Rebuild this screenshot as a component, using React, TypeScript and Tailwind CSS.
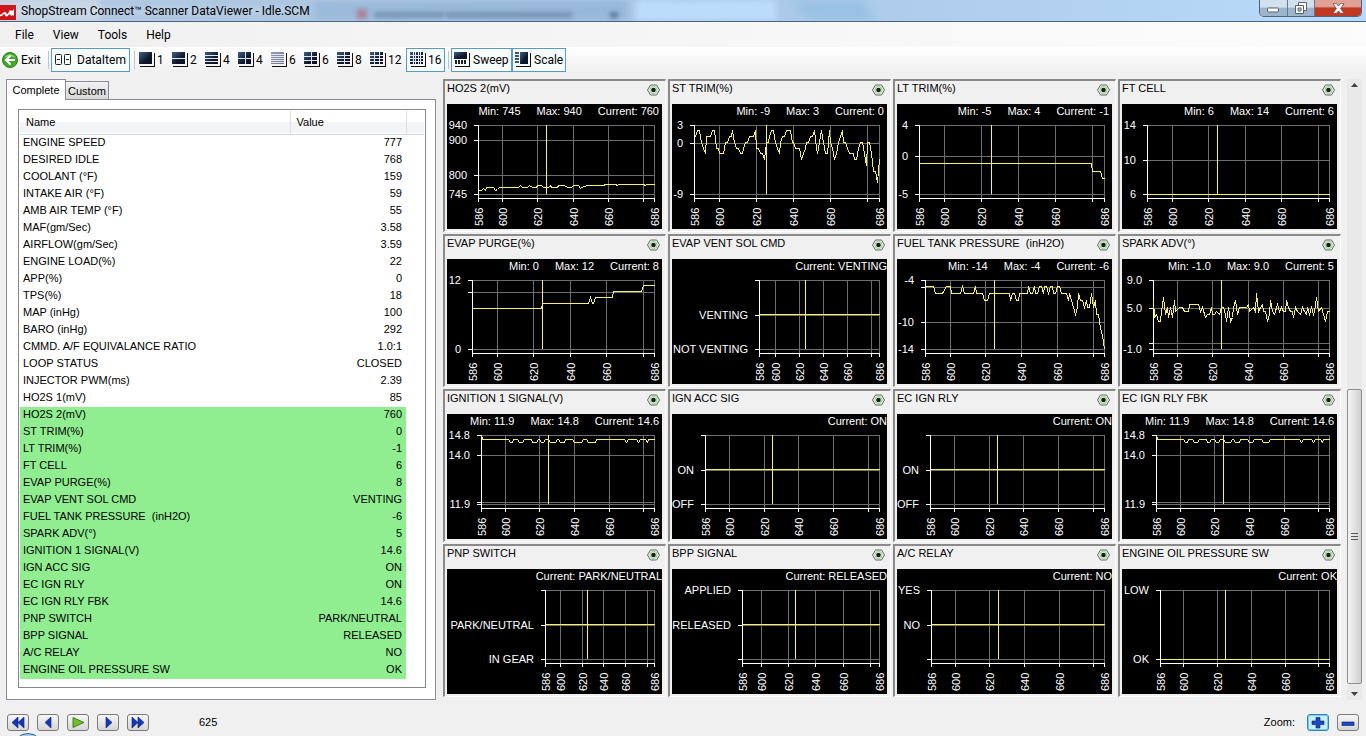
import type { ReactNode } from 'react';

type Tick = { v: number; label?: string };

type Graph = {
  title: string;
  stats: string[];
  left: number;
  min: number;
  max: number;
  ticks: Tick[];
  data: string;
  flush?: boolean;
};

const params: [string, string][] = [
  ['ENGINE SPEED', '777'],
  ['DESIRED IDLE', '768'],
  ['COOLANT (°F)', '159'],
  ['INTAKE AIR (°F)', '59'],
  ['AMB AIR TEMP (°F)', '55'],
  ['MAF(gm/Sec)', '3.58'],
  ['AIRFLOW(gm/Sec)', '3.59'],
  ['ENGINE LOAD(%)', '22'],
  ['APP(%)', '0'],
  ['TPS(%)', '18'],
  ['MAP (inHg)', '100'],
  ['BARO (inHg)', '292'],
  ['CMMD. A/F EQUIVALANCE RATIO', '1.0:1'],
  ['LOOP STATUS', 'CLOSED'],
  ['INJECTOR PWM(ms)', '2.39'],
  ['HO2S 1(mV)', '85'],
  ['HO2S 2(mV)', '760'],
  ['ST TRIM(%)', '0'],
  ['LT TRIM(%)', '-1'],
  ['FT CELL', '6'],
  ['EVAP PURGE(%)', '8'],
  ['EVAP VENT SOL CMD', 'VENTING'],
  ['FUEL TANK PRESSURE  (inH2O)', '-6'],
  ['SPARK ADV(°)', '5'],
  ['IGNITION 1 SIGNAL(V)', '14.6'],
  ['IGN ACC SIG', 'ON'],
  ['EC IGN RLY', 'ON'],
  ['EC IGN RLY FBK', '14.6'],
  ['PNP SWITCH', 'PARK/NEUTRAL'],
  ['BPP SIGNAL', 'RELEASED'],
  ['A/C RELAY', 'NO'],
  ['ENGINE OIL PRESSURE SW', 'OK'],
];

const FIRST_GRAPHED = 16;

// series are "frame,value" pairs, frames counted from 586
const stTrim = [
  1, 1, 2, 2, 0, -1, -2, 1, 1, 1, 2, 2, -1, -1, -2, -2, -2, 0, 0, 1, 1, 2, 0, -1, -1, -2, -2, -1, 0, 0, 1, 1, 1, 2, -1,
  -1, -2, -2, -3, 0, 0, 1, 2, 2, 0, -1, -2, 0, 1, 1, 2, 2, 2, 0, 0, -1, -1, -1, -3, -2, -1, 0, 0, 1, 1, 2, -1, -2, 0, 2,
  0, -2, -2, 2, 0, -1, -3, -2, 0, 1, 2, 0, 0, -1, -2, -2, -2, -3, -3, -1, 0, 0, -2, -4, 0, 0, -2, -5, -5, -7, -3,
]
  .map((v, i) => `${i},${v}`)
  .join(' ');

const o2 =
  '0,755 2,755 3,760 4,756 5,763 9,762 10,756 11,757 12,763 23,763 24,768 25,763 28,763 29,768 31,763 33,763 34,768 36,768 37,762 40,762 41,768 42,762 45,762 46,768 49,768 51,762 53,762 54,768 57,768 58,761 60,767 63,770 66,770 67,768 69,770 71,768 73,771 78,771 79,768 80,771 94,771 95,769 96,771 100,771';

const tank =
  '0,-5 5,-5 6,-6 10,-6 12,-5 14,-5 15,-6 20,-6 21,-5 22,-6 27,-6 28,-5 29,-6 32,-6 33,-7 35,-7 36,-6 47,-6 48,-7 49,-6 50,-6 51,-7 52,-7 53,-6 57,-6 58,-5 59,-6 60,-6 61,-5 62,-6 63,-6 64,-5 65,-5 66,-6 67,-5 68,-5 69,-6 70,-5 71,-5 72,-6 73,-6 74,-5 75,-5 76,-6 79,-6 80,-7 81,-6 82,-7 84,-9 85,-8 86,-6 87,-7 88,-7 89,-8 90,-7 91,-8 92,-8 93,-6 94,-8 95,-7 96,-9 97,-9 98,-11 99,-12 100,-14';

const spark =
  '0,6 1,3.5 2,4 3,3 4,3 5,4.5 6,6.5 7,4 8,5 9,3.5 10,5 11,3.5 12,6 13,4.5 15,5 17,5 18,4.5 20,4.5 21,5.5 26,5.5 27,4.5 28,5 30,3.5 31,4 32,4 33,5 34,4 35,4 36,4.5 38,4 39,5 40,5 41,4 42,3 43,5 44,3 45,3.5 46,5 47,6 48,4 49,5 53,5 54,5.5 55,4.5 57,5 58,4.5 59,7 60,4.5 61,5 62,5.5 63,4.5 64,4.5 65,3 66,4 67,6 68,4.5 69,4 71,5.5 72,4.5 73,5 74,4.5 75,4.5 76,6 77,5 78,4.5 79,4.5 80,3.5 81,5 82,4.5 84,4 85,5 86,4.5 87,4 88,5 89,4 90,5 91,4 92,4.5 93,6.5 94,4.5 96,5 97,4 98,3 99,4.5 100,4.5';

// battery voltage sits at 14.6 and drops by a tenth over each of these spans
function volts(dips: [number, number][]) {
  const body = dips.map(([a, b]) => `${a - 1},14.6 ${a},14.5 ${b},14.5 ${b + 1},14.6`).join(' ');
  return `0,14.8 1,14.6 ${body} 100,14.6`;
}

const flat = (v: number) => `0,${v} 100,${v}`;

const voltTicks: Tick[] = [
  { v: 14.8, label: '14.8' },
  { v: 14, label: '14.0' },
  { v: 12 },
  { v: 11.9, label: '11.9' },
];

const stateTicks = (top?: string, mid?: string, bottom?: string): Tick[] => [
  { v: 2, label: top },
  { v: 1, label: mid },
  { v: 0, label: bottom },
];

const graphs: Graph[] = [
  {
    title: 'HO2S 2(mV)',
    stats: ['Min: 745', 'Max: 940', 'Current: 760'],
    left: 31, min: 745, max: 940,
    ticks: [{ v: 940, label: '940' }, { v: 900, label: '900' }, { v: 800, label: '800' }, { v: 745, label: '745' }],
    data: o2,
  },
  {
    title: 'ST TRIM(%)',
    stats: ['Min: -9', 'Max: 3', 'Current: 0'],
    left: 22, min: -9, max: 3,
    ticks: [{ v: 3, label: '3' }, { v: 0, label: '0' }, { v: -9, label: '-9' }],
    data: stTrim,
  },
  {
    title: 'LT TRIM(%)',
    stats: ['Min: -5', 'Max: 4', 'Current: -1'],
    left: 22, min: -5, max: 4,
    ticks: [{ v: 4, label: '4' }, { v: 0, label: '0' }, { v: -5, label: '-5' }],
    data: '0,-1 93,-1 94,-2 98,-2 99,-3 100,-3',
  },
  {
    title: 'FT CELL',
    stats: ['Min: 6', 'Max: 14', 'Current: 6'],
    left: 25, min: 6, max: 14,
    ticks: [{ v: 14, label: '14' }, { v: 10, label: '10' }, { v: 6, label: '6' }],
    data: flat(6),
  },
  {
    title: 'EVAP PURGE(%)',
    stats: ['Min: 0', 'Max: 12', 'Current: 8'],
    left: 25, min: 0, max: 12,
    ticks: [{ v: 12, label: '12' }, { v: 10 }, { v: 0, label: '0' }],
    data: '0,7 38,7 39,8 64,8 65,9 66,8 67,8 68,9 77,9 78,10 93,10 94,11 100,11',
  },
  {
    title: 'EVAP VENT SOL CMD',
    stats: ['Current: VENTING'],
    left: 87, min: 0, max: 2,
    ticks: stateTicks(undefined, 'VENTING', 'NOT VENTING'),
    data: flat(1),
    flush: true,
  },
  {
    title: 'FUEL TANK PRESSURE  (inH2O)',
    stats: ['Min: -14', 'Max: -4', 'Current: -6'],
    left: 28, min: -14, max: -4,
    ticks: [{ v: -4, label: '-4' }, { v: -5 }, { v: -10, label: '-10' }, { v: -14, label: '-14' }],
    data: tank,
  },
  {
    title: 'SPARK ADV(°)',
    stats: ['Min: -1.0', 'Max: 9.0', 'Current: 5'],
    left: 31, min: -1, max: 9,
    ticks: [{ v: 9, label: '9.0' }, { v: 5, label: '5.0' }, { v: 0 }, { v: -1, label: '-1.0' }],
    data: spark,
  },
  {
    title: 'IGNITION 1 SIGNAL(V)',
    stats: ['Min: 11.9', 'Max: 14.8', 'Current: 14.6'],
    left: 34, min: 11.9, max: 14.8,
    ticks: voltTicks,
    data: volts([[17, 18], [22, 24], [30, 32], [35, 36], [40, 43], [46, 48], [54, 58], [62, 66], [84, 84], [91, 91], [96, 96]]),
  },
  {
    title: 'IGN ACC SIG',
    stats: ['Current: ON'],
    left: 33, min: 0, max: 2,
    ticks: stateTicks(undefined, 'ON', 'OFF'),
    data: flat(1),
    flush: true,
  },
  {
    title: 'EC IGN RLY',
    stats: ['Current: ON'],
    left: 33, min: 0, max: 2,
    ticks: stateTicks(undefined, 'ON', 'OFF'),
    data: flat(1),
    flush: true,
  },
  {
    title: 'EC IGN RLY FBK',
    stats: ['Min: 11.9', 'Max: 14.8', 'Current: 14.6'],
    left: 34, min: 11.9, max: 14.8,
    ticks: voltTicks,
    data: volts([[17, 18], [22, 24], [30, 31], [35, 36], [40, 43], [46, 48], [54, 56], [62, 65], [84, 84], [91, 91], [96, 96]]),
  },
  {
    title: 'PNP SWITCH',
    stats: ['Current: PARK/NEUTRAL'],
    left: 98, min: 0, max: 2,
    ticks: stateTicks(undefined, 'PARK/NEUTRAL', 'IN GEAR'),
    data: flat(1),
    flush: true,
  },
  {
    title: 'BPP SIGNAL',
    stats: ['Current: RELEASED'],
    left: 70, min: 0, max: 2,
    ticks: stateTicks('APPLIED', 'RELEASED'),
    data: flat(1),
    flush: true,
  },
  {
    title: 'A/C RELAY',
    stats: ['Current: NO'],
    left: 34, min: 0, max: 2,
    ticks: stateTicks('YES', 'NO'),
    data: flat(1),
    flush: true,
  },
  {
    title: 'ENGINE OIL PRESSURE SW',
    stats: ['Current: OK'],
    left: 38, min: 0, max: 1,
    ticks: [{ v: 1, label: 'LOW' }, { v: 0, label: 'OK' }],
    data: flat(0),
    flush: true,
  },
];

const frames = [586, 600, 620, 640, 660, 680, 686];
const CURSOR = 625;
const TOP = 21;
const BOTTOM = 90;
const RIGHT = 207;

function Plot({ graph }: { graph: Graph }) {
  const { left, min, max } = graph;
  const px = (f: number) => Math.floor(left + (f / 100) * (RIGHT - left)) + 0.5;
  const rawY = (v: number) => TOP + ((max - v) / (max - min)) * (BOTTOM - TOP);
  const tickY = (v: number) => Math.ceil(rawY(v) - 0.001) + 0.5;
  const points = graph.data
    .split(' ')
    .map((p) => p.split(',').map(Number))
    .map(([f, v]) => `${px(f)},${Math.floor(rawY(v) + 0.001) + 0.5}`)
    .join(' ');

  return (
    <svg viewBox="0 15 215 110" className="block w-full" shapeRendering="crispEdges" role="img" aria-label={graph.title}>
      <g stroke="#6e6e6e">
        {graph.ticks.map((t) => (
          <line key={t.v} x1={left} x2={RIGHT + 1} y1={tickY(t.v)} y2={tickY(t.v)} />
        ))}
        {frames.slice(1).map((f) => (
          <line key={f} x1={px(f - 586)} x2={px(f - 586)} y1={TOP} y2="94" />
        ))}
      </g>
      <g stroke="#ffffff">
        <path d={`M${left + 0.5} ${TOP}V98M${left} 94.5H${RIGHT + 1}`} fill="none" />
        {graph.ticks.map((t) => (
          <line key={t.v} x1={left - 4} x2={left} y1={tickY(t.v)} y2={tickY(t.v)} />
        ))}
        {frames.map((f) => (
          <line key={f} x1={px(f - 586)} x2={px(f - 586)} y1="94" y2="98" />
        ))}
      </g>
      <polyline points={points} fill="none" stroke="#f7f25c" />
      <line x1={px(CURSOR - 586)} x2={px(CURSOR - 586)} y1={TOP} y2={BOTTOM} stroke="#f7f25c" />
      <g fill="#ffffff" className="text-[11px]">
        {graph.ticks
          .filter((t) => t.label)
          .map((t) => (
            <text key={t.v} x={left - 11} y={tickY(t.v) + 3.5} textAnchor="end">
              {t.label}
            </text>
          ))}
        {frames
          .filter((f) => f !== 680)
          .map((f) => (
            <text key={f} transform={`translate(${px(f - 586) + 4.5} 122) rotate(-90)`}>
              {f}
            </text>
          ))}
      </g>
    </svg>
  );
}

function GraphCard({ graph }: { graph: Graph }) {
  return (
    <article className="border-t-2 border-r border-b border-l-2 border-t-[#8a8a8a] border-r-white border-b-white border-l-[#8a8a8a] bg-[#f0f0f0] pr-[3px] pb-0.5 pl-0.5">
      <header className="flex h-[23px] items-start justify-between">
        <h3 className="text-[11px] leading-[14px] whitespace-pre text-black">{graph.title}</h3>
        <button type="button" aria-label={`${graph.title} options`} className="mt-[3px] mr-0.5">
          <svg width="13" height="12" viewBox="0 0 13 12">
            <path d="M3.500 1h6l3 5-3 5h-6L.5 6z" fill="#eef8ec" stroke="#5c6b5c" />
            <circle cx="6.500" cy="6" r="3.600" fill="none" stroke="#9cc49c" />
            <circle cx="6.500" cy="6" r="2.300" fill="#10240f" />
          </svg>
        </button>
      </header>
      <div className="bg-black">
        <div
          className={`flex h-[15px] justify-end gap-4 text-[11px] leading-[14px] whitespace-nowrap text-white ${graph.flush ? 'pr-0' : 'pr-[3px]'}`}
        >
          {graph.stats.map((s) => (
            <span key={s}>{s}</span>
          ))}
        </div>
        <Plot graph={graph} />
      </div>
    </article>
  );
}

function LayoutIcon({ cols, rows, light }: { cols: number; rows: number; light?: boolean }) {
  return (
    <svg width="16" height="15" viewBox="0 0 16 15" shapeRendering="crispEdges">
      <path d="M15 1v13.500M1 14h14.500" stroke="#111" fill="none" />
      <rect width="13" height="12" fill={light ? 'url(#screenLight)' : 'url(#screen)'} />
      {Array.from({ length: cols - 1 }, (_, i) => (
        <rect key={`c${i}`} x={Math.round(((i + 1) * 13) / cols)} y="0" width="1" height="12" fill="#e4e8ee" />
      ))}
      {Array.from({ length: rows - 1 }, (_, i) => (
        <rect key={`r${i}`} x="0" y={Math.round(((i + 1) * 12) / rows)} width="13" height="1" fill="#e4e8ee" />
      ))}
    </svg>
  );
}

const layouts = [
  { n: 1, cols: 1, rows: 1 },
  { n: 2, cols: 1, rows: 2 },
  { n: 4, cols: 1, rows: 4 },
  { n: 4, cols: 2, rows: 2 },
  { n: 6, cols: 1, rows: 6, light: true },
  { n: 6, cols: 2, rows: 3 },
  { n: 8, cols: 2, rows: 4 },
  { n: 12, cols: 3, rows: 4 },
];

function Divider() {
  return <span className="h-[18px] w-px bg-[#c3c3c3]" />;
}

function TitleBar() {
  return (
    <header className="relative flex h-[22px] items-center overflow-hidden border-b border-[#4a6484] bg-linear-to-r from-[#c5d3e2] via-[#a9c7e6] to-[#b9dafa]">
      <div className="absolute inset-y-0 left-[100px] w-[528px] bg-[#8fb2d6] opacity-70 blur-[3px]" />
      <div className="absolute inset-y-1 left-3 w-[300px] bg-[#d5e2f0] opacity-60 blur-[5px]" />
      <div className="absolute top-[9px] left-[357px] h-2.5 w-2.5 bg-[#b0768c] opacity-80 blur-[2px]" />
      <div className="absolute top-3 left-[374px] h-1.5 w-[70px] bg-[#5f7d9c] opacity-60 blur-[2px]" />
      <div className="absolute top-3 left-[446px] h-1.5 w-[126px] bg-[#5f7d9c] opacity-60 blur-[2px]" />
      <div className="absolute top-3 left-[610px] h-1.5 w-2 bg-[#46617f] opacity-70 blur-[2px]" />
      <div className="absolute inset-y-0 left-[636px] w-[140px] bg-[#bcdcfc] blur-[3px]" />
      <div className="absolute inset-y-0 left-[800px] w-[70px] skew-x-[30deg] bg-[#8bb9dc] opacity-60 blur-[6px]" />
      <svg width="16" height="15" viewBox="0 0 16 15" className="relative mt-1">
        <rect width="16" height="15" fill="#d0141c" />
        <path d="M0 9.500c2 1 3-3 5-2.500s1 3 3 1.500l2-3.500 2 1 2-2v7l-1-1-2 1-1-2-3 2.500c-2 0-2-3-3-2.500S2 12 0 11z" fill="#fff" />
      </svg>
      <h1 className="relative ml-[5px] font-[Roboto,'Noto_Sans',sans-serif] text-[12px] text-black">
        ShopStream Connect™ Scanner DataViewer - Idle.SCM
      </h1>
      <div className="relative mr-1 ml-auto flex h-[17px] self-start overflow-hidden rounded-b-[5px] border border-t-0 border-[#4d6580]">
        <button
          type="button"
          aria-label="Minimize"
          className="flex w-7 items-center justify-center border-r border-[#5f7894] bg-linear-to-b from-[#d3e1ee] from-45% to-[#9db5cc] to-50%"
        >
          <svg width="13" height="6" viewBox="0 0 13 6" className="mt-1">
            <rect x=".5" y="1" width="11" height="4" rx="1" fill="#fff" stroke="#59636e" />
          </svg>
        </button>
        <button
          type="button"
          aria-label="Restore"
          className="flex w-[27px] items-center justify-center border-r border-[#5f7894] bg-linear-to-b from-[#d3e1ee] from-45% to-[#9db5cc] to-50%"
        >
          <svg width="13" height="13" viewBox="0 0 13 13">
            <path d="M3.500.5h8v8h-8z" fill="#fff" stroke="#59636e" />
            <path d="M.5 3.500h8v8h-8z" fill="#fff" stroke="#59636e" />
            <path d="M3 6h3v3H3z" fill="#b9c6d2" stroke="#59636e" />
          </svg>
        </button>
        <button
          type="button"
          aria-label="Close"
          className="flex w-[46px] items-center justify-center bg-linear-to-b from-[#e0a196] from-40% to-[#c03a22] to-50%"
        >
          <svg width="13" height="11" viewBox="0 0 13 11">
            <path
              d="M1 .7h3.500l2 2.300 2-2.300H12L8.600 5.500 12 10.300H8.500l-2-2.300-2 2.300H1l3.400-4.800z"
              fill="#fff"
              stroke="#6b4a4a"
              strokeWidth=".8"
            />
          </svg>
        </button>
      </div>
    </header>
  );
}

function ToolBar() {
  return (
    <div className="flex h-[25px] items-center bg-linear-to-b from-white to-[#f0f0f0] font-[Roboto,'Noto_Sans',sans-serif] text-[12px] text-black">
      <svg width="0" height="0" className="absolute">
        <defs>
          <linearGradient id="screen" x1="0" y1="0" x2="1" y2="1">
            <stop offset="0" stopColor="#40608a" />
            <stop offset=".6" stopColor="#10192b" />
            <stop offset="1" stopColor="#0a1020" />
          </linearGradient>
          <linearGradient id="screenLight" x1="0" y1="0" x2="1" y2="1">
            <stop offset="0" stopColor="#9a9fb0" />
            <stop offset="1" stopColor="#6d7286" />
          </linearGradient>
        </defs>
      </svg>
      <button type="button" className="flex w-12 items-center gap-[3px] pl-0.5">
        <svg width="16" height="16" viewBox="0 0 16 16">
          <circle cx="8" cy="8" r="7.500" fill="#45a82c" stroke="#2c7a1c" />
          <path d="M2.500 6a6 6 0 0 1 11 0 12 12 0 0 0-11 0z" fill="#8fd677" />
          <path d="M8.500 3.500 4 8l4.500 4.500M4.500 8H13" fill="none" stroke="#fff" strokeWidth="2" />
        </svg>
        Exit
      </button>
      <Divider />
      <button
        type="button"
        className="mr-1 ml-0.5 flex h-6 w-[79px] items-center gap-[5px] border border-[#5a9bc4] bg-[#f6fbfe] pl-[3px]"
      >
        <svg width="17" height="11" viewBox="0 0 17 11" fill="none" stroke="#222">
          <rect x=".5" y=".5" width="6" height="10" rx="1" />
          <path d="M2 5.500h3M11 5.500h3" />
          <rect x="9.500" y=".5" width="6" height="10" rx="1" />
        </svg>
        DataItem
      </button>
      <Divider />
      <div className="ml-1 flex">
        {layouts.map((l, i) => (
          <button key={i} type="button" className="flex w-[33px] items-center gap-0.5">
            <LayoutIcon cols={l.cols} rows={l.rows} light={l.light} />
            {l.n}
          </button>
        ))}
      </div>
      <button
        type="button"
        className="mr-[3px] ml-[3px] flex h-6 w-[39px] items-center gap-0.5 border border-[#5a9bc4] bg-[#f6fbfe] pl-[3px]"
      >
        <LayoutIcon cols={5} rows={4} />
        16
      </button>
      <Divider />
      <button
        type="button"
        className="ml-0.5 flex h-6 w-[61px] items-center gap-[3px] border border-[#5a9bc4] bg-[#f6fbfe] pl-0.5"
      >
        <svg width="16" height="15" viewBox="0 0 16 15" shapeRendering="crispEdges">
          <path d="M15 1v13.500M1 14h14.500" stroke="#111" fill="none" />
          <rect width="13" height="7" fill="url(#screen)" />
          <path d="M1.500 8v4M4.500 8v4M7.500 8v4M10.500 8v4" stroke="#222" strokeWidth="2" />
        </svg>
        Sweep
      </button>
      <button
        type="button"
        className="flex h-6 w-[54px] items-center gap-[3px] border border-[#5a9bc4] bg-[#f6fbfe] pl-0.5"
      >
        <svg width="16" height="15" viewBox="0 0 16 15" shapeRendering="crispEdges">
          <path d="M15 1v13.500M1 14h14.500" stroke="#111" fill="none" />
          <rect x="5" width="8" height="12" fill="url(#screen)" />
          <path d="M0 1h4M0 4h4M0 7h4M0 10h4" stroke="#3d5678" strokeWidth="2" />
        </svg>
        Scale
      </button>
    </div>
  );
}

function DataList() {
  return (
    <aside className="flex w-[430px] shrink-0 flex-col">
      <div role="tablist" className="flex items-end text-[11px] leading-[16px] text-black">
        <button
          type="button"
          role="tab"
          aria-selected="true"
          className="relative z-10 -mb-px h-[21px] w-[60px] border border-b-0 border-[#898c95] bg-white"
        >
          Complete
        </button>
        <button
          type="button"
          role="tab"
          aria-selected="false"
          className="h-[18px] w-[43px] border border-b-0 border-l-0 border-[#898c95] bg-linear-to-b from-[#f2f2f2] to-[#d8d8d8]"
        >
          Custom
        </button>
      </div>
      <div className="flex-1 border border-[#898c95] bg-white pt-[9px] pr-[9px] pb-[11px] pl-[11px]">
        <div className="h-full border border-[#828790] px-px pt-px text-[11px]">
          <table className="w-full table-fixed border-collapse text-black">
            <colgroup>
              <col />
              <col className="w-[116px]" />
              <col className="w-[18px]" />
            </colgroup>
            <thead>
              <tr className="h-[23px] border-b border-[#d5d5d5] bg-linear-to-b from-white from-50% to-[#f3f4f5] to-50% text-left">
                <th className="pl-1.5 font-normal">Name</th>
                <th className="border-x border-[#dedfe1] pl-1.5 font-normal">Value</th>
                <th />
              </tr>
            </thead>
            <tbody>
              {params.map(([name, value], i) => (
                <tr key={name} className="h-[17px]">
                  <td
                    className={`p-0 pb-[3px] pl-[3px] leading-[14px] whitespace-pre ${i >= FIRST_GRAPHED ? 'bg-[#90ee90]' : ''}`}
                  >
                    {name}
                  </td>
                  <td
                    className={`p-0 pr-1 pb-[3px] text-right leading-[14px] whitespace-nowrap ${i >= FIRST_GRAPHED ? 'bg-[#90ee90]' : ''}`}
                  >
                    {value}
                  </td>
                  <td />
                </tr>
              ))}
            </tbody>
          </table>
        </div>
      </div>
    </aside>
  );
}

function ScrollBar() {
  return (
    <div className="ml-1.5 flex w-[15px] flex-col items-center bg-[#e9e9e9]">
      <button type="button" aria-label="Scroll up" className="flex h-3 w-full items-center justify-center">
        <svg width="7" height="4" viewBox="0 0 7 4">
          <path d="M0 4 3.500 0 7 4z" fill="#404040" />
        </svg>
      </button>
      <div className="grow-[300] basis-0" />
      <div className="flex w-full grow-[294] basis-0 items-center justify-center rounded-[2px] border border-[#8e8e8e] bg-linear-to-r from-[#f5f5f5] to-[#cfcfcf]">
        <svg width="7" height="8" viewBox="0 0 7 8" shapeRendering="crispEdges">
          <path d="M0 .5h7M0 3.500h7M0 6.500h7" stroke="#555" />
        </svg>
      </div>
      <button type="button" aria-label="Scroll down" className="flex h-4 w-full items-end justify-center pb-1">
        <svg width="7" height="4" viewBox="0 0 7 4">
          <path d="M0 0 3.500 4 7 0z" fill="#404040" />
        </svg>
      </button>
    </div>
  );
}

function PushButton({ label, active, children }: { label: string; active?: boolean; children: ReactNode }) {
  return (
    <button
      type="button"
      aria-label={label}
      className={`flex h-[17px] w-[22px] items-center justify-center rounded-[3px] border ${
        active
          ? 'border-[#3c7fb1] bg-[#c9ecfa] shadow-[inset_0_0_0_1px_#67d3f5]'
          : 'border-[#7b7b7b] bg-linear-to-b from-[#f6f6f6] to-[#d6d6d6]'
      }`}
    >
      <svg width="16" height="13" viewBox="0 0 16 13">
        {children}
      </svg>
    </button>
  );
}

function TransportBar() {
  return (
    <footer className="relative flex h-9 items-center overflow-hidden px-[7px] pt-2 text-[11px] text-black">
      <div className="flex gap-2">
        <PushButton label="First">
          <path d="M8 1v11L2 6.500zM14 1v11L8 6.500z" fill="#1439b8" stroke="#0a1c66" strokeWidth=".6" />
        </PushButton>
        <PushButton label="Previous">
          <path d="M11 1v11L5 6.500z" fill="#1439b8" stroke="#0a1c66" strokeWidth=".6" />
        </PushButton>
        <PushButton label="Play">
          <path d="M3 1.500v10l11-5z" fill="#6fbf2a" stroke="#2f6b10" strokeWidth=".8" />
        </PushButton>
        <PushButton label="Next">
          <path d="M6 1v11l6-5.500z" fill="#1439b8" stroke="#0a1c66" strokeWidth=".6" />
        </PushButton>
        <PushButton label="Last">
          <path d="M2 1v11l6-5.500zM8 1v11l6-5.500z" fill="#1439b8" stroke="#0a1c66" strokeWidth=".6" />
        </PushButton>
      </div>
      <output className="ml-[50px]">{CURSOR}</output>
      <div className="ml-auto flex items-center gap-2">
        <span className="mr-1">Zoom:</span>
        <PushButton label="Zoom in" active>
          <path d="M6 1.500h4V5h4v3.500h-4V12H6V8.500H2V5h4z" fill="#1c49c0" stroke="#0a1c66" strokeWidth=".6" />
        </PushButton>
        <PushButton label="Zoom out">
          <path d="M2 6h12v3.500H2z" fill="#1c49c0" stroke="#0a1c66" strokeWidth=".6" />
        </PushButton>
      </div>
      {/* top edge of the start orb peeking over the taskbar */}
      <span className="absolute top-[33px] left-3 h-8 w-8 rounded-full border border-[#2f5f8f] bg-[#a9cbe6]" />
    </footer>
  );
}

export default function App() {
  return (
    <div className="flex min-h-screen flex-col bg-[#f0f0f0] font-['Liberation_Sans',Arial,sans-serif]">
      <TitleBar />
      <nav className="flex h-[25px] items-center gap-[19px] bg-linear-to-r from-[#f0f0f0] to-[#fcfcfc] pl-[15px] font-[Roboto,'Noto_Sans',sans-serif] text-[12px] text-black">
        <button type="button">File</button>
        <button type="button">View</button>
        <button type="button">Tools</button>
        <button type="button">Help</button>
      </nav>
      <ToolBar />
      <main className="flex flex-1 pt-[7px] pr-1 pl-1.5">
        <DataList />
        <section className="ml-[7px] grid flex-1 grid-cols-4 content-start gap-0.5">
          {graphs.map((g) => (
            <GraphCard key={g.title} graph={g} />
          ))}
        </section>
        <ScrollBar />
      </main>
      <TransportBar />
    </div>
  );
}
